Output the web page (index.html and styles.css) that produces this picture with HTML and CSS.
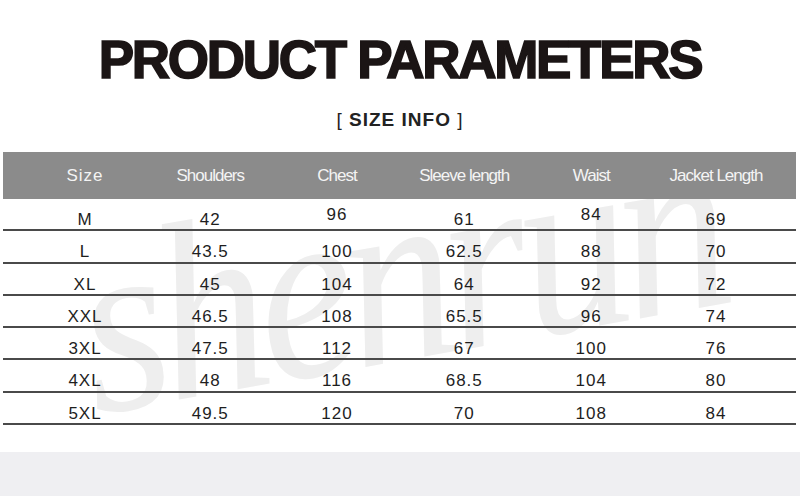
FILE: index.html
```html
<!DOCTYPE html>
<html>
<head>
<meta charset="utf-8">
<link rel="stylesheet" href="styles.css">
</head>
<body>
<div class="page">
  <div class="watermark">shenrun</div>
  <h1 class="title">PRODUCT PARAMETERS</h1>
  <div class="subtitle"><span class="br">[</span> SIZE INFO <span class="br">]</span></div>
  <div class="table">
    <div class="row head">
      <div class="cell size-h">Size</div>
      <div class="cell">Shoulders</div>
      <div class="cell">Chest</div>
      <div class="cell">Sleeve length</div>
      <div class="cell">Waist</div>
      <div class="cell">Jacket Length</div>
    </div>
    <div class="row"><div class="cell">M</div><div class="cell">42</div><div class="cell up">96</div><div class="cell">61</div><div class="cell up">84</div><div class="cell">69</div></div>
    <div class="row"><div class="cell">L</div><div class="cell">43.5</div><div class="cell">100</div><div class="cell">62.5</div><div class="cell">88</div><div class="cell">70</div></div>
    <div class="row"><div class="cell">XL</div><div class="cell">45</div><div class="cell">104</div><div class="cell">64</div><div class="cell">92</div><div class="cell">72</div></div>
    <div class="row"><div class="cell">XXL</div><div class="cell">46.5</div><div class="cell">108</div><div class="cell">65.5</div><div class="cell">96</div><div class="cell">74</div></div>
    <div class="row"><div class="cell">3XL</div><div class="cell">47.5</div><div class="cell">112</div><div class="cell">67</div><div class="cell">100</div><div class="cell">76</div></div>
    <div class="row"><div class="cell">4XL</div><div class="cell">48</div><div class="cell">116</div><div class="cell">68.5</div><div class="cell">104</div><div class="cell">80</div></div>
    <div class="row"><div class="cell">5XL</div><div class="cell">49.5</div><div class="cell">120</div><div class="cell">70</div><div class="cell">108</div><div class="cell">84</div></div>
  </div>
  <div class="band"></div>
</div>
</body>
</html>
```

FILE: styles.css
```css
html, body {
  margin: 0;
  padding: 0;
  background: #ffffff;
}
.page {
  position: relative;
  width: 800px;
  height: 496px;
  overflow: hidden;
  font-family: "Liberation Sans", Arial, sans-serif;
  display: flex;
  flex-direction: column;
}
.watermark {
  position: absolute;
  left: 98px;
  top: 232px;
  font-family: "Liberation Serif", "Times New Roman", serif;
  font-style: italic;
  font-size: 220px;
  line-height: 220px;
  color: #eeeeee;
  transform-origin: 0 196px;
  transform: rotate(-10deg) scaleY(1.15);
  letter-spacing: -9px;
  z-index: 0;
  white-space: nowrap;
}
.title {
  position: relative;
  z-index: 1;
  margin: 30px 0 0 0;
  text-align: center;
  font-size: 53px;
  line-height: 60px;
  height: 60px;
  font-weight: bold;
  color: #1b1515;
  letter-spacing: -2.3px;
  -webkit-text-stroke: 1.6px #1b1515;
}
.subtitle {
  position: relative;
  z-index: 1;
  margin-top: 18px;
  height: 24px;
  line-height: 24px;
  text-align: center;
  font-size: 19px;
  font-weight: bold;
  color: #222;
  letter-spacing: 1px;
}
.subtitle .br {
  font-weight: normal;
}
.table {
  position: relative;
  z-index: 1;
  margin: 20px 0 0 3px;
  width: 793px;
}
.row {
  display: grid;
  grid-template-columns: 124px 126.5px 127px 127.5px 126.5px 123px;
  padding: 0 18.5px 0 20px;
  height: 32.3px;
  box-sizing: border-box;
  border-bottom: 2px solid #4a4a4a;
}
.row .cell {
  display: flex;
  align-items: center;
  justify-content: center;
  padding-top: 11px;
  font-size: 17px;
  letter-spacing: 1px;
  color: #1e1e1e;
}
.row .cell.up {
  padding-top: 0;
}
.row.head {
  height: 47px;
  background: #8b8b8b;
  border-bottom: none;
}
.row.head .cell {
  padding-top: 0;
  color: #f4f4f4;
  font-size: 17px;
  letter-spacing: -1px;
}
.row.head .cell.size-h {
  letter-spacing: 1px;
}
.band {
  margin-top: 27px;
  height: 44px;
  background: #efeff2;
}
```
